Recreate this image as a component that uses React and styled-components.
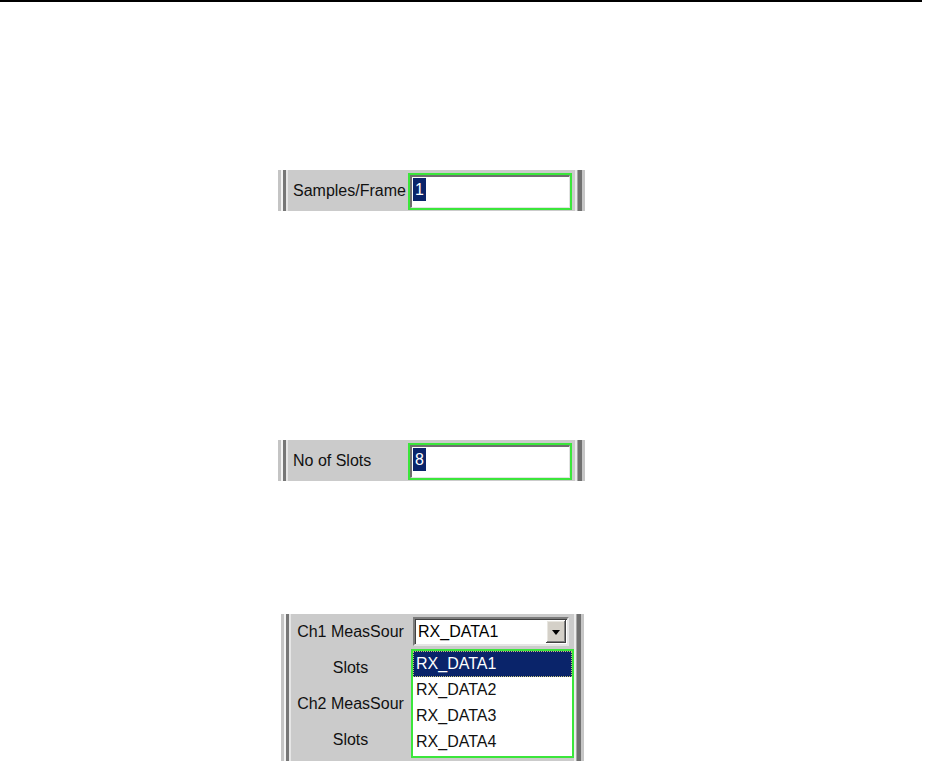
import React from "react";
import styled, { createGlobalStyle } from "styled-components";

const GlobalStyle = createGlobalStyle`
  html, body {
    margin: 0;
    padding: 0;
    background: #ffffff;
  }
  body {
    font-family: "Liberation Sans", Arial, sans-serif;
    font-size: 16px;
    color: #000000;
  }
`;

const Page = styled.div`
  width: 925px;
  height: 761px;
  overflow: hidden;
  background: #ffffff;
`;

const TopRule = styled.div`
  width: 922px;
  height: 2px;
  background: #000000;
`;

const Panel = styled.div`
  position: relative;
  display: flex;
  margin-left: ${(props) => props.$left}px;
  margin-top: ${(props) => props.$top}px;
  width: ${(props) => props.$width}px;
  height: ${(props) => props.$height}px;
`;

const LeftEdge = styled.div`
  flex: none;
  width: 12px;
  background: linear-gradient(
    to right,
    #c4c4c4 0 3px,
    #f4f4f4 3px 5px,
    #767676 5px 8px,
    #e6e6e6 8px 10px,
    #cbcbcb 10px 12px
  );
`;

const RightEdge = styled.div`
  flex: none;
  width: 13px;
  background: linear-gradient(
    to right,
    #cbcbcb 0 3px,
    #ececec 3px 5px,
    #a6a6a6 5px 6px,
    #707070 6px 10px,
    #c6c6c6 10px 13px
  );
`;

const PanelBody = styled.div`
  flex: 1;
  background: #cbcbcb;
  display: flex;
  align-items: flex-start;
`;

const Label = styled.div`
  flex: none;
  width: ${(props) => props.$width}px;
  padding-left: 3px;
  height: 41px;
  line-height: 41px;
  white-space: nowrap;
  box-sizing: border-box;
  color: #111111;
`;

const Field = styled.div`
  margin-top: 3px;
  width: 164px;
  height: 37px;
  box-sizing: border-box;
  border: 2px solid #3be63b;
  background: #ffffff;
`;

const FieldInner = styled.div`
  height: 100%;
  box-sizing: border-box;
  border-top: 2px solid #6e6e6e;
  border-left: 2px solid #6e6e6e;
  border-right: 1px solid #e2e2e2;
  border-bottom: 1px solid #e2e2e2;
  padding: 1px;
  display: flex;
  align-items: flex-start;
`;

const Selected = styled.span`
  display: inline-block;
  height: 23px;
  line-height: 23px;
  padding: 0 2px;
  background: #0a246a;
  color: #ffffff;
`;

const Grid = styled.div`
  flex: 1;
  background: #cbcbcb;
  display: grid;
  grid-template-columns: 115px 156px;
  grid-template-rows: repeat(4, 36px);
  column-gap: 5px;
`;

const RowLabel = styled.div`
  display: flex;
  align-items: center;
  justify-content: center;
  white-space: nowrap;
  color: #111111;
`;

const Combo = styled.div`
  align-self: start;
  margin-top: 3px;
  height: 29px;
  box-sizing: border-box;
  background: #ffffff;
  border-top: 2px solid #7c7c7c;
  border-left: 2px solid #7c7c7c;
  border-right: 2px solid #e6e6e6;
  border-bottom: 2px solid #e6e6e6;
  box-shadow: inset 1px 1px #404040;
  display: flex;
  align-items: center;
  padding-left: 3px;
`;

const ComboText = styled.span`
  flex: 1;
  white-space: nowrap;
`;

const ArrowButton = styled.div`
  flex: none;
  width: 20px;
  height: 23px;
  margin-right: 1px;
  background: #d4d0c8;
  box-shadow: inset -1px -1px #404040, inset 1px 1px #ffffff,
    inset -2px -2px #808080, inset 2px 2px #e8e6e0;
  display: flex;
  align-items: center;
  justify-content: center;
`;

const Triangle = styled.span`
  width: 0;
  height: 0;
  border-left: 4px solid transparent;
  border-right: 4px solid transparent;
  border-top: 5px solid #000000;
  margin-top: 1px;
`;

const DropList = styled.div`
  position: absolute;
  left: 130px;
  top: 35px;
  width: 163px;
  height: 109px;
  box-sizing: border-box;
  border: 2px solid #3be63b;
  background: #ffffff;
`;

const Item = styled.div`
  height: 26px;
  line-height: 26px;
  padding-left: 3px;
  box-sizing: border-box;
  white-space: nowrap;
  background: ${(props) => (props.$active ? "#0a246a" : "transparent")};
  color: ${(props) => (props.$active ? "#ffffff" : "#111111")};
  outline: ${(props) => (props.$active ? "1px dotted #c9c27a" : "none")};
  outline-offset: -1px;
`;

const options = ["RX_DATA1", "RX_DATA2", "RX_DATA3", "RX_DATA4"];

function ValuePanel({ top, left, width, label, value }) {
  return (
    <Panel $top={top} $left={left} $width={width} $height={41}>
      <LeftEdge />
      <PanelBody>
        <Label $width={118}>{label}</Label>
        <Field>
          <FieldInner>
            <Selected>{value}</Selected>
          </FieldInner>
        </Field>
      </PanelBody>
      <RightEdge />
    </Panel>
  );
}

export default function App() {
  return (
    <Page>
      <GlobalStyle />
      <TopRule />
      <ValuePanel top={168} left={278} width={307} label="Samples/Frame" value="1" />
      <ValuePanel top={229} left={278} width={307} label="No of Slots" value="8" />
      <Panel $top={133} $left={281} $width={303} $height={147}>
        <LeftEdge />
        <Grid>
          <RowLabel>Ch1 MeasSour</RowLabel>
          <Combo>
            <ComboText>RX_DATA1</ComboText>
            <ArrowButton>
              <Triangle />
            </ArrowButton>
          </Combo>
          <RowLabel>Slots</RowLabel>
          <div />
          <RowLabel>Ch2 MeasSour</RowLabel>
          <div />
          <RowLabel>Slots</RowLabel>
          <div />
        </Grid>
        <RightEdge />
        <DropList>
          {options.map((opt, i) => (
            <Item key={opt} $active={i === 0}>
              {opt}
            </Item>
          ))}
        </DropList>
      </Panel>
    </Page>
  );
}
